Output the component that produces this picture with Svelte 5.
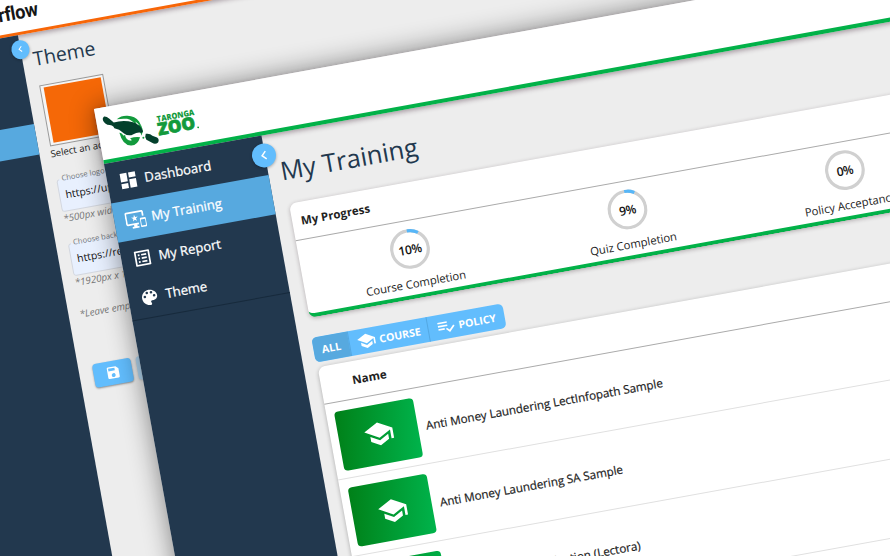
<script>
  const icons = {
    dashboard: 'M3 13h8V3H3v10zm0 8h8v-6H3v6zm10 0h8V11h-8v10zm0-18v6h8V3h-8z',
    devices:
      'M23 11.01L18 11c-.55 0-1 .45-1 1v9c0 .55.45 1 1 1h5c.55 0 1-.45 1-1v-9c0-.55-.45-.99-1-.99zM23 20h-5v-7h5v7zM20 2H2C.89 2 0 2.89 0 4v12c0 1.1.89 2 2 2h7v2H7v2h8v-2h-2v-2h2v-2H2V4h18v5h2V4c0-1.11-.9-2-2-2zm-8.03 7L11 6l-.97 3H7l2.47 1.76-.94 2.91 2.47-1.8 2.47 1.8-.94-2.91L15 9h-3.03z',
    list: 'M19 5v14H5V5h14m1.1-2H3.9c-.5 0-.9.4-.9.9v16.2c0 .4.4.9.9.9h16.2c.4 0 .9-.5.9-.9V3.9c0-.5-.5-.9-.9-.9zM11 7h6v2h-6V7zm0 4h6v2h-6v-2zm0 4h6v2h-6zM7 7h2v2H7zm0 4h2v2H7zm0 4h2v2H7z',
    palette:
      'M12 3c-4.97 0-9 4.03-9 9s4.03 9 9 9c.83 0 1.5-.67 1.5-1.5 0-.39-.15-.74-.39-1.01-.23-.26-.38-.61-.38-.99 0-.83.67-1.5 1.5-1.5H16c2.76 0 5-2.24 5-5 0-4.42-4.03-8-9-8zm-5.5 9c-.83 0-1.5-.67-1.5-1.5S5.67 9 6.5 9 8 9.67 8 10.5 7.33 12 6.5 12zm3-4C8.67 8 8 7.33 8 6.5S8.67 5 9.5 5s1.5.67 1.5 1.5S10.33 8 9.5 8zm5 0c-.83 0-1.5-.67-1.5-1.5S13.67 5 14.5 5s1.5.67 1.5 1.5S15.33 8 14.5 8zm3 4c-.83 0-1.5-.67-1.5-1.5S16.67 9 17.5 9s1.5.67 1.5 1.5-.67 1.5-1.5 1.5z',
    chevron: 'M15.41 7.41L14 6l-6 6 6 6 1.41-1.41L10.83 12z',
    school: 'M5 13.18v4L12 21l7-3.82v-4L12 17l-7-3.82zM12 3L1 9l11 6 9-4.91V17h2V9L12 3z',
    policy: 'M14 10H2v2h12v-2zm0-4H2v2h12V6zM2 16h8v-2H2v2zm19.5-4.5L23 13l-6.99 7-4.51-4.5L13 14l3.01 3 5.49-5.5z',
    save: 'M17 3H5c-1.11 0-2 .9-2 2v14c0 1.1.89 2 2 2h14c1.1 0 2-.9 2-2V7l-4-4zm-5 16c-1.66 0-3-1.34-3-3s1.34-3 3-3 3 1.34 3 3-1.34 3-3 3zm3-10H5V5h10v4z',
  };
  const menu = [
    { icon: 'dashboard', label: 'Dashboard' },
    { icon: 'devices', label: 'My Training', active: true },
    { icon: 'list', label: 'My Report' },
    { icon: 'palette', label: 'Theme' },
  ];
  const progress = [
    { value: 10, label: 'Course Completion' },
    { value: 9, label: 'Quiz Completion' },
    { value: 0, label: 'Policy Acceptance' },
  ];
  const courses = [
    'Anti Money Laundering LectInfopath Sample',
    'Anti Money Laundering SA Sample',
    'Home Safety Introduction (Lectora)',
  ];
</script>

{#snippet icon(name, size)}
  <svg class="icon" width={size} height={size} viewBox="0 0 24 24"><path d={icons[name]} /></svg>
{/snippet}

<main class="stage">
  <section class="window back">
    <header class="top">
      <span class="wordmark">rflow</span>
    </header>
    <div class="body">
      <nav class="side">
        <div class="side-active"></div>
        <span class="toggle">{@render icon('chevron', 12)}</span>
      </nav>
      <div class="theme">
        <h2>Theme</h2>
        <div class="swatch"><i></i></div>
        <p class="hint">Select an accent color</p>
        <div class="field"><span class="legend">Choose logo</span>https://upload.png</div>
        <p class="note">*500px wide by 100px</p>
        <div class="field second"><span class="legend">Choose background</span>https://res.cloud</div>
        <p class="note">*1920px x 1080px</p>
        <p class="note last">*Leave empty to reset</p>
        <div class="actions">
          <span class="save">{@render icon('save', 15.5)}</span>
          <span class="save faint"></span>
        </div>
      </div>
    </div>
  </section>

  <section class="window front">
    <header class="top">
      <svg class="logo" width="120" height="52" viewBox="0 0 120 52">
        <g transform="rotate(10.27) scale(.33333) translate(16.2 -13.5)">
          <path fill="#129a3c" d="M52 44Q66 33 84 34Q107 35 119 51L128 68Q119 60 108 51Q112 57 110 63Q98 46 83 43Q68 42 52 44Z" />
          <path fill="#129a3c" d="M116 59Q131 64 130 82L126 94Q125 87 121 82Q119 70 116 59Z" />
          <path fill="#129a3c" d="M60 85Q66 84 73 94L77 91Q78 108 96 109Q98 104 92 101Q108 96 122 98Q115 122 96 123Q70 124 60 85Z" />
          <path fill="#04402c" d="M14 36Q21 35 30 43L43 54Q71 45 101 53Q124 61 131 80L128 85Q114 81 102 89Q88 97 74 87L59 76L45 71Q40 61 24 61Q10 54 10 43Q11 38 14 36Z" />
          <path fill="#04402c" d="M139 88Q152 86 159 94L173 99Q181 105 176 114Q168 121 158 115L141 106Q135 98 139 88Z" />
          <circle cx="132" cy="100" r="3" fill="#129a3c" />
        </g>
        <text class="logo-small" x="60" y="24" textLength="38" lengthAdjust="spacingAndGlyphs">TARONGA</text>
        <text class="logo-big" x="59" y="37.5" textLength="38" lengthAdjust="spacingAndGlyphs">ZOO</text>
        <circle cx="99.2" cy="36.7" r=".9" fill="#129a3c" />
      </svg>
    </header>
    <div class="body">
      <nav class="side">
        <ul>
          {#each menu as item}
            <li class:active={item.active}>{@render icon(item.icon, 20.5)}<span>{item.label}</span></li>
          {/each}
        </ul>
        <span class="toggle">{@render icon('chevron', 18)}</span>
      </nav>
      <div class="content">
        <h1>My Training</h1>
        <section class="progress">
          <h3>My Progress</h3>
          <div class="rings">
            {#each progress as p}
              <div class="ring-cell">
                <div class="ring">
                  <svg width="40" height="40" viewBox="0 0 40 40">
                    <circle cx="20" cy="20" r="18.3" stroke="#d0d0d0" />
                    {#if p.value}
                      <circle cx="20" cy="20" r="18.3" stroke="#56b6f8" pathLength="100" stroke-dasharray="{p.value} 100" transform="rotate(-90 20 20)" />
                    {/if}
                  </svg>
                  <b>{p.value}%</b>
                </div>
                <span>{p.label}</span>
              </div>
            {/each}
          </div>
        </section>
        <div class="tabs">
          <span class="tab on">ALL</span>
          <span class="tab course">{@render icon('school', 19.5)}COURSE</span>
          <span class="tab policy">{@render icon('policy', 19)}POLICY</span>
        </div>
        <section class="table">
          <h3>Name</h3>
          {#each courses as course}
            <div class="row">
              <span class="thumb">{@render icon('school', 31)}</span>
              <span class="name">{course}</span>
            </div>
          {/each}
        </section>
      </div>
    </div>
  </section>
</main>

<style>
  .stage {
    position: relative;
    width: 890px;
    height: 556px;
    overflow: hidden;
    background: #ededed;
    font-family: 'Open Sans', 'Noto Sans', sans-serif;
    color: #222;
  }
  h1, h2, h3, p, ul { margin: 0; padding: 0; font-weight: 400; }
  .icon { display: block; flex: none; fill: currentColor; }
  .window {
    position: absolute;
    display: flex;
    flex-direction: column;
    box-sizing: border-box;
    transform-origin: 0 0;
    transform: rotate(-10.27deg);
    background: #ededed;
  }
  .top {
    flex: none;
    box-sizing: border-box;
    display: flex;
    background: #fff;
    position: relative;
    box-shadow: 0 2px 5px rgba(60, 30, 50, .4);
  }
  .body { display: flex; flex: 1; min-height: 0; }
  .side {
    position: relative;
    flex: none;
    background: #22384e;
    color: #fff;
    z-index: 2;
  }
  .toggle {
    position: absolute;
    display: flex;
    align-items: center;
    justify-content: center;
    border-radius: 50%;
    background: #62bdfd;
    color: #fff;
    box-shadow: 0 1px 3px rgba(0, 0, 0, .3);
  }

  /* rear window */
  .back { left: -111.2px; top: 13.9px; width: 1100px; height: 900px; }
  .back .top { height: 44px; border-bottom: 3px solid #f76608; padding: 2px 0 0 107px; align-items: center; }
  .wordmark {
    font: 700 19.5px Roboto, sans-serif;
    color: #161616;
    letter-spacing: -.3px;
    transform: scaleX(.93);
    transform-origin: 0 50%;
  }
  .back .side { width: 123px; }
  .side-active { margin-top: 90px; height: 30.5px; background: #57a9df; }
  .back .toggle { width: 18.6px; height: 18.6px; right: -9.4px; top: 5px; }
  .theme { padding: 12px 0 0 12px; display: flex; flex-direction: column; align-items: flex-start; white-space: nowrap; }
  h2 { font-size: 19.5px; line-height: 28px; color: #22384e; margin-left: -1px; }
  .swatch { box-sizing: border-box; width: 65px; height: 62.5px; margin-top: 12.5px; padding: 2.5px; border: 1px solid #9a9a9a; background: #f5f5f5; }
  .swatch i { display: block; height: 100%; background: #f56807; }
  .hint { font-size: 9.6px; line-height: 14px; margin-top: .5px; margin-left: -1px; }
  .field {
    position: relative;
    box-sizing: border-box;
    width: 260px;
    height: 33px;
    margin-top: 19px;
    margin-left: -.5px;
    padding-left: 6px;
    line-height: 31px;
    font-size: 10.5px;
    color: #111;
    background: #e8f0fe;
    border: 1px solid #d3d7df;
    border-radius: 3px;
  }
  .legend {
    position: absolute;
    left: 2px;
    top: -7px;
    padding: 0 3px;
    background: linear-gradient(#ededed 60%, #e8f0fe 60%);
    font-size: 7.6px;
    line-height: 10px;
    color: #737880;
  }
  .note { font-size: 9.8px; line-height: 14px; font-style: italic; color: #777; }
  .field.second { margin-top: 18px; }
  .last { margin-top: 18px; margin-left: -1px; }
  .actions { display: flex; gap: 5px; margin: 44px 0 0 2px; }
  .save {
    display: flex;
    align-items: center;
    justify-content: center;
    width: 38.5px;
    height: 24px;
    border-radius: 4px;
    background: #62bdfd;
    color: #fff;
    box-shadow: 0 1px 2px rgba(0, 0, 0, .4);
  }
  .faint { opacity: .4; }

  /* front window */
  .front { left: 94.1px; top: 109px; width: 1000px; height: 800px; box-shadow: 0 0 26px rgba(0, 0, 0, .46); }
  .front .top { height: 56px; border-bottom: 4px solid #02b148; }
  .logo { overflow: visible; }
  .logo-small { font: 800 8.2px 'Open Sans', sans-serif; fill: #129a3c; }
  .logo-big { font: 800 17.2px 'Open Sans', sans-serif; fill: #129a3c; stroke: #129a3c; stroke-width: .7px; }
  .front .side { width: 160px; }
  ul { list-style: none; border-bottom: 1px solid #172a3c; padding-top: .5px; }
  li {
    display: flex;
    align-items: center;
    gap: 6px;
    height: 39.5px;
    padding-left: 11px;
    box-sizing: border-box;
    font-size: 13.1px;
    -webkit-text-stroke: .25px currentColor;
  }
  li span { position: relative; top: -.7px; }
  li.active { background: #57a9df; }
  .front .toggle { width: 24px; height: 24px; right: -10.5px; top: 8.3px; }
  .content { flex: 1; padding: 20px 0 0 15.3px; white-space: nowrap; }
  h1 { font-size: 25.5px; line-height: 36px; color: #22384e; margin-left: -2.8px; }
  h3 { font-size: 11.5px; font-weight: 700; }
  .progress {
    box-sizing: border-box;
    width: 663px;
    height: 116.5px;
    margin-top: 15.8px;
    background: #fff;
    border-radius: 7px;
    border-bottom: 4px solid #02b148;
    box-shadow: 0 1px 4px rgba(40, 20, 30, .3);
  }
  .progress h3 { height: 37px; line-height: 37px; padding-left: 8.5px; border-bottom: 1px solid #aaa; }
  .rings { display: flex; }
  .ring-cell { flex: 1; display: flex; flex-direction: column; align-items: center; padding-top: 8.3px; font-size: 11.3px; }
  .ring-cell > span { line-height: 18px; margin-top: 5.5px; }
  .ring { position: relative; width: 40px; height: 40px; display: flex; align-items: center; justify-content: center; }
  .ring svg { position: absolute; inset: 0; fill: none; stroke-width: 3.2; }
  .ring b { font-size: 12.2px; font-weight: 600; color: #111; letter-spacing: -.4px; }
  .tabs {
    display: flex;
    width: 193.5px;
    height: 25px;
    margin: 20px 0 0 -2.3px;
    border-radius: 5px;
    overflow: hidden;
    background: #62bdfd;
    color: #fff;
    font-size: 10.6px;
    font-weight: 700;
  }
  .tab { display: flex; align-items: center; justify-content: center; box-sizing: border-box; gap: 3px; border-left: 1px solid #54a8e2; }
  .tab.on { width: 36px; background: #57a9df; border: 0; }
  .course { width: 80px; }
  .policy { flex: 1; }
  .table { margin: 4.5px 0 0 -1.5px; width: 800px; min-height: 420px; background: #fff; border-radius: 7px; box-shadow: 0 1px 4px rgba(0, 0, 0, .3); }
  .table h3 { height: 37px; line-height: 37px; padding-left: 32px; border-bottom: 1px solid #aaa; font-size: 11.6px; }
  .row { display: flex; align-items: center; gap: 8.5px; box-sizing: border-box; height: 77.7px; padding: 1px 0 0 8.5px; border-bottom: 1px solid #e0e0e0; }
  .thumb {
    display: flex;
    align-items: center;
    justify-content: center;
    width: 79.5px;
    height: 60px;
    border-radius: 4px;
    background: linear-gradient(100deg, #008018, #00b44c);
    color: #fff;
  }
  .name { font-size: 11.62px; -webkit-text-stroke: .2px currentColor; }
</style>
